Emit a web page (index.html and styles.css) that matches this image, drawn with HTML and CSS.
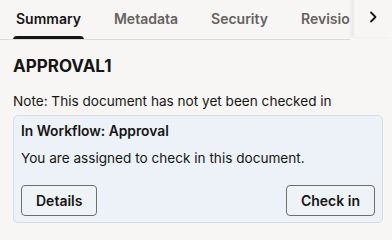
FILE: index.html
```html
<!DOCTYPE html>
<html>
<head>
<meta charset="utf-8">
<link rel="stylesheet" href="styles.css">
</head>
<body>
<div class="panel">
  <div class="tabbar">
    <div class="tabs">
      <div class="tab active">Summary</div>
      <div class="tab">Metadata</div>
      <div class="tab">Security</div>
      <div class="tab">Revisions</div>
    </div>
    <div class="more">
      <svg width="10" height="12" viewBox="0 0 10 12"><path d="M3 1.5 L7.5 6 L3 10.5" fill="none" stroke="#161513" stroke-width="1.8" stroke-linecap="round" stroke-linejoin="round"/></svg>
    </div>
  </div>
  <div class="content">
    <h1 class="title">APPROVAL1</h1>
    <p class="note">Note: This document has not yet been checked in</p>
    <div class="workflow">
      <div class="wf-title">In Workflow: Approval</div>
      <div class="wf-text">You are assigned to check in this document.</div>
      <div class="wf-actions">
        <button class="btn">Details</button>
        <button class="btn">Check in</button>
      </div>
    </div>
  </div>
</div>
</body>
</html>
```

FILE: styles.css
```css
html, body {
  margin: 0;
  padding: 0;
  background: #f7f6f5;
}
body {
  font-family: Inter, "Noto Sans", sans-serif;
  color: #161513;
  width: 392px;
  height: 235px;
  overflow: hidden;
}
.tabbar {
  position: relative;
  height: 40px;
}
.tabs {
  display: flex;
  overflow: hidden;
  border-bottom: 1px solid #dcdbd9;
  box-sizing: border-box;
  height: 40px;
  width: 350px;
}
.tab {
  flex: none;
  padding: 0 17px 0 16px;
  font-size: 14px;
  font-weight: 600;
  color: #66625e;
  line-height: 38px;
  position: relative;
  white-space: nowrap;
}
.tab.active {
  color: #161513;
}
.tab.active::after {
  content: "";
  position: absolute;
  left: 13px;
  right: 14px;
  bottom: -1px;
  height: 4px;
  background: #161513;
  border-radius: 4px 4px 0 0;
}
.more {
  position: absolute;
  top: 0;
  right: 0;
  width: 39px;
  height: 37px;
  display: flex;
  align-items: center;
  justify-content: center;
  box-shadow: -2px 0 3px rgba(0,0,0,0.06);
  border-left: 1px solid #ecebea;
  background: #f7f6f5;
  box-sizing: border-box;
  padding-bottom: 3px;
}
.content {
  padding: 0 9px 0 13px;
}
.title {
  margin: 14px 0 0;
  font-size: 17px;
  font-weight: 700;
  line-height: 24px;
}
.note {
  margin: 13px 0 0;
  font-size: 13.6px;
  line-height: 20px;
}
.workflow {
  margin-top: 4px;
  background: #ecf2f8;
  border: 1px solid #d6dde4;
  border-radius: 5px;
  padding: 5px 7px 6px 7px;
}
.wf-title {
  font-size: 13.8px;
  font-weight: 600;
  line-height: 20px;
}
.wf-text {
  margin-top: 7px;
  font-size: 13.6px;
  line-height: 20px;
}
.wf-actions {
  margin-top: 17px;
  display: flex;
  justify-content: space-between;
}
.btn {
  font-family: inherit;
  font-size: 14px;
  font-weight: 600;
  color: #161513;
  background: #eef3f8;
  border: 1px solid #716d69;
  border-radius: 4px;
  height: 31px;
  padding: 0 14px;
  margin: 0;
}
```
